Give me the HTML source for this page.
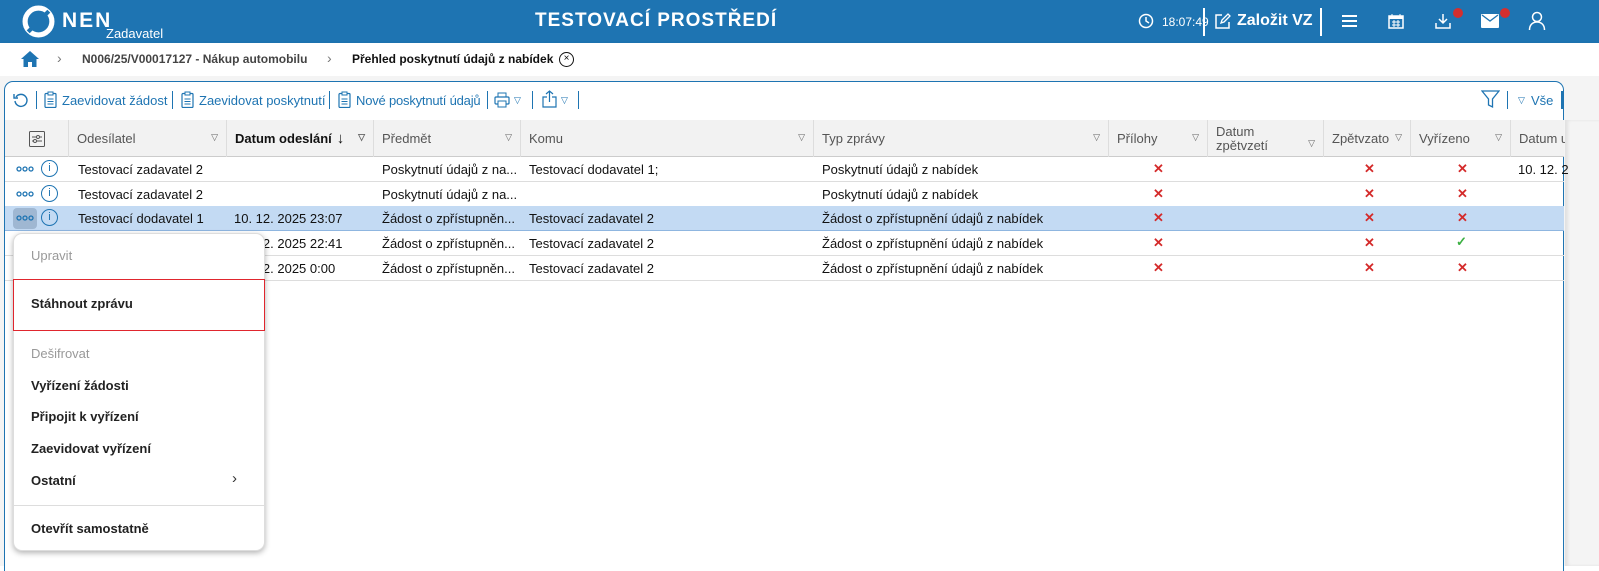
<!DOCTYPE html>
<html><head><meta charset="utf-8">
<style>
*{box-sizing:border-box;margin:0;padding:0}
body{width:1599px;height:566px;overflow:hidden;background:#fff;font-family:"Liberation Sans",sans-serif;font-size:13px;color:#111;position:relative}
.a{position:absolute}
.top{left:0;top:0;width:1599px;height:43px;background:#1e74b2;color:#fff}
.bc{left:0;top:43px;width:1599px;height:33px;background:#fff;box-shadow:0 2px 4px rgba(0,0,0,.15)}
.gray{left:0;top:76px;width:1599px;height:490px;background:#f4f4f4}
.panel{left:4px;top:81px;width:1560px;height:490px;background:#fff;border:1px solid #1e74b2;border-radius:9px 9px 0 0;border-bottom:none;overflow:hidden}
.tb{color:#1e74b2;font-size:13px}
.sep{width:1px;height:18px;background:#1e74b2}
.hdr{top:120px;height:37px;background:#f2f2f2;border-bottom:1px solid #ccc}
.hc{top:0;height:37px;border-left:1px solid #ddd;color:#555;padding:0 8px;display:flex;align-items:center}
.hc .t{position:absolute;right:8px;top:12px;font-size:9px;color:#666}
.row{left:5px;width:1559px;height:25px;border-bottom:1px solid #ddd}
.c{position:absolute;top:5px;font-size:13px;white-space:nowrap}
.x{color:#d42a2a;font-weight:bold;font-size:13px}
.menu{left:13px;top:233px;width:252px;height:318px;background:#fff;border-radius:9px;box-shadow:0 2px 6px rgba(0,0,0,.3);border:1px solid #ddd}
.mi{position:absolute;left:17px;font-size:13px;color:#111}
.dis{color:#999}
</style></head><body>
<div class="a top">
  <svg class="a" style="left:22px;top:5px" width="33" height="33" viewBox="0 0 32 32"><circle cx="16" cy="16" r="13" fill="none" stroke="#fff" stroke-width="5"/><path d="M6 26 L26 6" stroke="#1e74b2" stroke-width="4"/></svg>
  <div class="a" style="left:62px;top:9px;font-size:21px;font-weight:bold;letter-spacing:2px">NEN</div>
  <div class="a" style="left:106px;top:26px;font-size:13px">Zadavatel</div>
  <div class="a" style="left:535px;top:10px;font-size:19px;font-weight:bold;letter-spacing:1px">TESTOVACÍ PROSTŘEDÍ</div>
  <svg class="a" style="left:1138px;top:13px" width="16" height="16" viewBox="0 0 16 16"><circle cx="8" cy="8" r="6.5" fill="none" stroke="#fff" stroke-width="1.5"/><path d="M8 4v4l3 2" fill="none" stroke="#fff" stroke-width="1.5"/></svg>
  <div class="a" style="left:1162px;top:15px;font-size:12px">18:07:49</div>
  <div class="a" style="left:1203px;top:8px;width:2px;height:28px;background:#fff"></div>
  <svg class="a" style="left:1214px;top:13px" width="17" height="17" viewBox="0 0 17 17"><path d="M8 2H2v13h13V9" fill="none" stroke="#fff" stroke-width="1.5"/><path d="M7 10l1-3 6-6 2 2-6 6z" fill="none" stroke="#fff" stroke-width="1.3"/></svg>
  <div class="a" style="left:1237px;top:12px;font-size:16px;font-weight:bold">Založit VZ</div>
  <div class="a" style="left:1320px;top:8px;width:2px;height:28px;background:#fff"></div>
  <div class="a" style="left:1342px;top:15px;width:15px;height:2px;background:#fff;box-shadow:0 5px 0 #fff,0 10px 0 #fff"></div>
  <svg class="a" style="left:1388px;top:13px" width="16" height="16" viewBox="0 0 16 16"><rect x="1" y="3" width="14" height="12" fill="none" stroke="#fff" stroke-width="1.5"/><rect x="1" y="3" width="14" height="3" fill="#fff"/><path d="M4 1v3M12 1v3M4 9h8M4 12h8M6 7v7M10 7v7" stroke="#fff"/></svg>
  <svg class="a" style="left:1434px;top:12px" width="18" height="18" viewBox="0 0 18 18"><path d="M9 2v9M5 7l4 4 4-4M2 11v5h14v-5" fill="none" stroke="#fff" stroke-width="1.5"/></svg>
  <div class="a" style="left:1453px;top:8px;width:10px;height:10px;border-radius:50%;background:#d32f2f"></div>
  <svg class="a" style="left:1481px;top:14px" width="18" height="14" viewBox="0 0 18 14"><rect x="0" y="0" width="18" height="14" rx="1" fill="#fff"/><path d="M1 1l8 6 8-6" fill="none" stroke="#1e74b2" stroke-width="1.3"/></svg>
  <div class="a" style="left:1500px;top:8px;width:10px;height:10px;border-radius:50%;background:#d32f2f"></div>
  <svg class="a" style="left:1528px;top:11px" width="18" height="20" viewBox="0 0 18 20"><circle cx="9" cy="6" r="4.5" fill="none" stroke="#fff" stroke-width="1.5"/><path d="M1.5 19c0-5 3-8 7.5-8s7.5 3 7.5 8" fill="none" stroke="#fff" stroke-width="1.5"/></svg>
</div>
<div class="a bc">
  <svg class="a" style="left:21px;top:8px" width="18" height="16" viewBox="0 0 18 16"><path d="M9 0L0 8h2.5v8h4.5v-5h4v5h4.5V8H18z" fill="#1e74b2"/></svg>
  <div class="a" style="left:57px;top:7px;color:#777;font-size:14px">&#x203A;</div>
  <div class="a" style="left:82px;top:9px;color:#444;font-weight:bold;font-size:12px">N006/25/V00017127 - Nákup automobilu</div>
  <div class="a" style="left:327px;top:7px;color:#777;font-size:14px">&#x203A;</div>
  <div class="a" style="left:352px;top:9px;color:#111;font-weight:bold;font-size:12px">Přehled poskytnutí údajů z nabídek</div>
  <div class="a" style="left:559px;top:9px;width:15px;height:15px;border:1.3px solid #111;border-radius:50%;font-size:10px;text-align:center;line-height:12px">×</div>
</div>
<div class="a gray"></div>
<div class="a panel"></div>
<svg class="a" style="left:13px;top:92px" width="16" height="16" viewBox="0 0 16 16"><path d="M3 5a6 6 0 1 1-1 4" fill="none" stroke="#1e74b2" stroke-width="1.4"/><path d="M1 2v4h4" fill="none" stroke="#1e74b2" stroke-width="1.4"/></svg>
<div class="a sep" style="left:36px;top:91px"></div>
<svg class="a" style="left:44px;top:91px" width="13" height="17" viewBox="0 0 13 17"><rect x="1" y="2.5" width="11" height="14" rx="1" fill="none" stroke="#1e74b2" stroke-width="1.2"/><rect x="4" y="1" width="5" height="3" fill="#fff" stroke="#1e74b2"/><path d="M3.5 8h6M3.5 10.5h6M3.5 13h6" stroke="#1e74b2"/></svg>
<div class="a tb" style="left:62px;top:93px">Zaevidovat žádost</div>
<div class="a sep" style="left:172px;top:91px"></div>
<svg class="a" style="left:181px;top:91px" width="13" height="17" viewBox="0 0 13 17"><rect x="1" y="2.5" width="11" height="14" rx="1" fill="none" stroke="#1e74b2" stroke-width="1.2"/><rect x="4" y="1" width="5" height="3" fill="#fff" stroke="#1e74b2"/><path d="M3.5 8h6M3.5 10.5h6M3.5 13h6" stroke="#1e74b2"/></svg>
<div class="a tb" style="left:199px;top:93px">Zaevidovat poskytnutí</div>
<div class="a sep" style="left:329px;top:91px"></div>
<svg class="a" style="left:338px;top:91px" width="13" height="17" viewBox="0 0 13 17"><rect x="1" y="2.5" width="11" height="14" rx="1" fill="none" stroke="#1e74b2" stroke-width="1.2"/><rect x="4" y="1" width="5" height="3" fill="#fff" stroke="#1e74b2"/><path d="M3.5 8h6M3.5 10.5h6M3.5 13h6" stroke="#1e74b2"/></svg>
<div class="a tb" style="left:356px;top:93px;letter-spacing:-.2px">Nové poskytnutí údajů</div>
<div class="a sep" style="left:487px;top:91px"></div>
<svg class="a" style="left:494px;top:92px" width="16" height="16" viewBox="0 0 16 16"><rect x="4" y="1" width="8" height="4" fill="none" stroke="#1e74b2"/><rect x="1" y="5" width="14" height="7" rx="1" fill="none" stroke="#1e74b2" stroke-width="1.2"/><rect x="4" y="9" width="8" height="6" fill="#fff" stroke="#1e74b2"/></svg>
<div class="a" style="left:514px;top:95px;font-size:9px;color:#1e74b2">▽</div>
<div class="a sep" style="left:532px;top:91px"></div>
<svg class="a" style="left:542px;top:90px" width="15" height="18" viewBox="0 0 15 18"><path d="M5 7H1v10h13V7h-4M7.5 12V1M4 4l3.5-3 3.5 3" fill="none" stroke="#1e74b2" stroke-width="1.2"/></svg>
<div class="a" style="left:561px;top:95px;font-size:9px;color:#1e74b2">▽</div>
<div class="a sep" style="left:578px;top:91px"></div>
<svg class="a" style="left:1481px;top:90px" width="19" height="19" viewBox="0 0 19 19"><path d="M1 1h17l-6.5 8v8l-4-2V9z" fill="none" stroke="#1e74b2" stroke-width="1.3"/></svg>
<div class="a sep" style="left:1507px;top:91px"></div>
<div class="a" style="left:1518px;top:95px;font-size:9px;color:#1e74b2">▽</div>
<div class="a tb" style="left:1531px;top:93px">Vše</div>
<div class="a" style="left:1561px;top:91px;width:2px;height:18px;background:#1e74b2"></div>
<div class="a hdr" style="left:5px;width:1559px">
  <svg class="a" style="left:24px;top:11px" width="16" height="16" viewBox="0 0 16 16"><rect x=".5" y=".5" width="15" height="15" rx="1" fill="none" stroke="#555"/><path d="M3 6h10M3 10h10" stroke="#555"/><circle cx="9" cy="6" r="1.5" fill="#fff" stroke="#555"/><circle cx="6" cy="10" r="1.5" fill="#fff" stroke="#555"/></svg>
  <div class="a hc" style="left:63px;width:158px">Odesílatel<span class="t">▽</span></div>
  <div class="a hc" style="left:221px;width:147px;color:#111;font-weight:bold">Datum odeslání <span style="font-weight:normal;margin-left:5px;font-size:15px">↓</span><span class="t">▽</span></div>
  <div class="a hc" style="left:368px;width:147px">Předmět<span class="t">▽</span></div>
  <div class="a hc" style="left:515px;width:293px">Komu<span class="t">▽</span></div>
  <div class="a hc" style="left:808px;width:295px">Typ zprávy<span class="t">▽</span></div>
  <div class="a hc" style="left:1103px;width:99px">Přílohy<span class="t">▽</span></div>
  <div class="a hc" style="left:1202px;width:116px;line-height:14px">Datum<br>zpětvzetí<span class="t" style="top:16px">▽</span></div>
  <div class="a hc" style="left:1318px;width:87px">Zpětvzato<span class="t">▽</span></div>
  <div class="a hc" style="left:1405px;width:100px">Vyřízeno<span class="t">▽</span></div>
  <div class="a hc" style="left:1505px;width:60px;overflow:hidden;white-space:nowrap">Datum u</div>
</div>
<div class="a row" style="top:157px"></div>
<div class="a row" style="top:182px"></div>
<div class="a row" style="top:206px;background:#c3daf3;border-bottom:1px solid #8fb6e0"></div>
<div class="a row" style="top:231px"></div>
<div class="a row" style="top:256px"></div>
<div class="a" style="left:1565px;top:120px;width:34px;height:446px;background:#f4f4f4;box-shadow:inset 3px 0 3px rgba(0,0,0,.08)"></div>
<div class="a" style="left:13px;top:208px;width:24px;height:21px;background:#9fb7d2;border-radius:4px"></div>
<div class="a" style="left:0;top:157px;width:1565px;height:125px">
 <svg class="c" style="left:16px;top:9px" width="18" height="6" viewBox="0 0 18 6"><g fill="none" stroke="#1e74b2" stroke-width="1.3"><circle cx="3" cy="3" r="2"/><circle cx="9" cy="3" r="2"/><circle cx="15" cy="3" r="2"/></g></svg>
 <div class="c" style="left:41px;top:3px;width:17px;height:17px;border:1.3px solid #1e74b2;border-radius:50%;color:#1e74b2;font-size:11px;text-align:center;line-height:15px">i</div>
 <svg class="c" style="left:16px;top:34px" width="18" height="6" viewBox="0 0 18 6"><g fill="none" stroke="#1e74b2" stroke-width="1.3"><circle cx="3" cy="3" r="2"/><circle cx="9" cy="3" r="2"/><circle cx="15" cy="3" r="2"/></g></svg>
 <div class="c" style="left:41px;top:28px;width:17px;height:17px;border:1.3px solid #1e74b2;border-radius:50%;color:#1e74b2;font-size:11px;text-align:center;line-height:15px">i</div>
 <svg class="c" style="left:16px;top:58px" width="18" height="6" viewBox="0 0 18 6"><g fill="none" stroke="#1e74b2" stroke-width="1.3"><circle cx="3" cy="3" r="2"/><circle cx="9" cy="3" r="2"/><circle cx="15" cy="3" r="2"/></g></svg>
 <div class="c" style="left:41px;top:52px;width:17px;height:17px;border:1.3px solid #1e74b2;border-radius:50%;color:#1e74b2;font-size:11px;text-align:center;line-height:15px">i</div>

 <div class="c" style="left:78px">Testovací zadavatel 2</div>
 <div class="c" style="left:382px">Poskytnutí údajů z na...</div>
 <div class="c" style="left:529px">Testovací dodavatel 1;</div>
 <div class="c" style="left:822px">Poskytnutí údajů z nabídek</div>
 <div class="c" style="left:1518px">10. 12. 2</div>

 <div class="c" style="left:78px;top:30px">Testovací zadavatel 2</div>
 <div class="c" style="left:382px;top:30px">Poskytnutí údajů z na...</div>
 <div class="c" style="left:822px;top:30px">Poskytnutí údajů z nabídek</div>

 <div class="c" style="left:78px;top:54px">Testovací dodavatel 1</div>
 <div class="c" style="left:234px;top:54px">10. 12. 2025 23:07</div>
 <div class="c" style="left:382px;top:54px">Žádost o zpřístupněn...</div>
 <div class="c" style="left:529px;top:54px">Testovací zadavatel 2</div>
 <div class="c" style="left:822px;top:54px">Žádost o zpřístupnění údajů z nabídek</div>

 <div class="c" style="left:234px;top:79px">10. 12. 2025 22:41</div>
 <div class="c" style="left:382px;top:79px">Žádost o zpřístupněn...</div>
 <div class="c" style="left:529px;top:79px">Testovací zadavatel 2</div>
 <div class="c" style="left:822px;top:79px">Žádost o zpřístupnění údajů z nabídek</div>

 <div class="c" style="left:234px;top:104px">10. 12. 2025 0:00</div>
 <div class="c" style="left:382px;top:104px">Žádost o zpřístupněn...</div>
 <div class="c" style="left:529px;top:104px">Testovací zadavatel 2</div>
 <div class="c" style="left:822px;top:104px">Žádost o zpřístupnění údajů z nabídek</div>

 <div class="c x" style="left:1153px;top:4px">✕</div><div class="c x" style="left:1364px;top:4px">✕</div><div class="c x" style="left:1457px;top:4px">✕</div>
 <div class="c x" style="left:1153px;top:29px">✕</div><div class="c x" style="left:1364px;top:29px">✕</div><div class="c x" style="left:1457px;top:29px">✕</div>
 <div class="c x" style="left:1153px;top:53px">✕</div><div class="c x" style="left:1364px;top:53px">✕</div><div class="c x" style="left:1457px;top:53px">✕</div>
 <div class="c x" style="left:1153px;top:78px">✕</div><div class="c x" style="left:1364px;top:78px">✕</div><div class="c" style="left:1456px;top:77px;color:#3cb043;font-weight:bold">✓</div>
 <div class="c x" style="left:1153px;top:103px">✕</div><div class="c x" style="left:1364px;top:103px">✕</div><div class="c x" style="left:1457px;top:103px">✕</div>
</div>
<div class="a menu">
  <div class="mi dis" style="top:14px">Upravit</div>
  <div class="a" style="left:-1px;top:45px;width:252px;height:52px;border:1.5px solid #e0262e"></div>
  <div class="mi" style="top:62px;font-weight:bold;color:#222">Stáhnout zprávu</div>
  <div class="mi dis" style="top:112px">Dešifrovat</div>
  <div class="mi" style="top:144px;font-weight:bold;color:#222">Vyřízení žádosti</div>
  <div class="mi" style="top:175px;font-weight:bold;color:#222">Připojit k vyřízení</div>
  <div class="mi" style="top:207px;font-weight:bold;color:#222">Zaevidovat vyřízení</div>
  <div class="mi" style="top:239px;font-weight:bold;color:#222">Ostatní</div>
  <div class="mi" style="left:218px;top:236px;font-size:15px;color:#333">›</div>
  <div class="a" style="left:0;top:271px;width:250px;height:1px;background:#ddd"></div>
  <div class="mi" style="top:287px;font-weight:bold;color:#222">Otevřít samostatně</div>
</div>
</body></html>
